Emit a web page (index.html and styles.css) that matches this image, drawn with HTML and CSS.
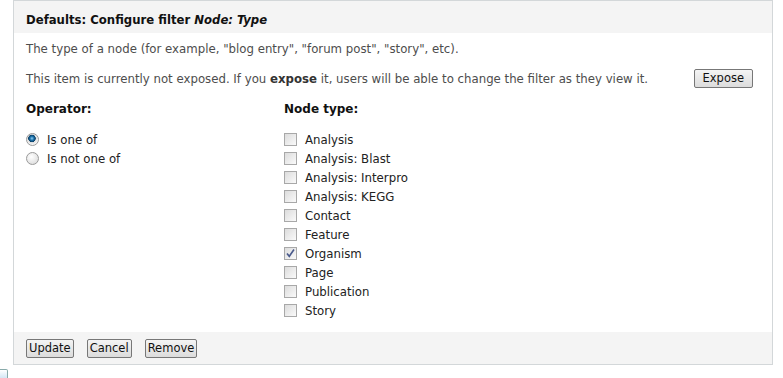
FILE: index.html
```html
<!DOCTYPE html>
<html lang="en">
<head>
    <meta charset="UTF-8">
    <title>Configure filter</title>
    <link rel="stylesheet" href="styles.css">
</head>
<body>
    <form class="views-dialog">
        <div class="dialog-header">
            <h3>Defaults: Configure filter <em>Node: Type</em></h3>
        </div>

        <div class="dialog-body">
            <p class="description">The type of a node (for example, "blog entry", "forum post", "story", etc).</p>

            <div class="expose-row">
                <p>This item is currently not exposed. If you <strong>expose</strong> it, users will be able to change the filter as they view it.</p>
                <button type="button" class="form-button">Expose</button>
            </div>

            <div class="columns">
                <div class="column operator">
                    <label class="column-title">Operator:</label>
                    <label class="option"><input type="radio" name="op" checked> Is one of</label>
                    <label class="option"><input type="radio" name="op"> Is not one of</label>
                </div>
                <div class="column node-type">
                    <label class="column-title">Node type:</label>
                    <label class="option"><input type="checkbox"> Analysis</label>
                    <label class="option"><input type="checkbox"> Analysis: Blast</label>
                    <label class="option"><input type="checkbox"> Analysis: Interpro</label>
                    <label class="option"><input type="checkbox"> Analysis: KEGG</label>
                    <label class="option"><input type="checkbox"> Contact</label>
                    <label class="option"><input type="checkbox"> Feature</label>
                    <label class="option"><input type="checkbox" checked> Organism</label>
                    <label class="option"><input type="checkbox"> Page</label>
                    <label class="option"><input type="checkbox"> Publication</label>
                    <label class="option"><input type="checkbox"> Story</label>
                </div>
            </div>
        </div>

        <div class="dialog-footer">
            <button type="button" class="form-button">Update</button>
            <button type="button" class="form-button">Cancel</button>
            <button type="button" class="form-button">Remove</button>
        </div>
    </form>

    <div class="corner-icon"></div>
</body>
</html>
```

FILE: styles.css
```css
body {
    margin: 0;
    font-family: "DejaVu Sans", Verdana, sans-serif;
    font-size: 11.75px;
    color: #4d4d4d;
    background: #fff;
}

.views-dialog {
    width: 758px;
    margin-left: 13px;
    border: 1px solid #d3d7d9;
}

.dialog-header {
    height: 32px;
    background: #f4f4f4;
    padding: 0 12px;
    display: flex;
    align-items: flex-end;
}

.dialog-header h3 {
    margin: 0 0 6px 0;
    font-size: 11.7px;
    font-weight: bold;
    color: #111;
}

.dialog-body {
    padding: 8px 12px 12px 12px;
}

.description {
    margin: 0;
    line-height: 16px;
}

.expose-row {
    display: flex;
    align-items: center;
    justify-content: space-between;
    margin-top: 12px;
    padding-right: 7px;
}

.expose-row p {
    margin: 0;
}

.expose-row strong {
    color: #333;
}

.form-button {
    font-family: "DejaVu Sans", Verdana, sans-serif;
    font-size: 11.5px;
    color: #111;
    background: linear-gradient(#f4f4f4, #dcdcdc);
    border: 1px solid #777;
    border-radius: 2px;
    padding: 1px 2px;
    height: 19px;
    line-height: 15px;
}

.expose-row .form-button {
    padding: 1px 8px;
}

.columns {
    display: flex;
    margin-top: 13px;
}

.column {
    display: flex;
    flex-direction: column;
}

.operator {
    width: 258px;
}

.column-title {
    font-weight: bold;
    font-size: 12px;
    color: #111;
    margin-bottom: 13px;
    line-height: 16px;
}

.option {
    display: flex;
    align-items: center;
    height: 19px;
    color: #222;
}

.option input {
    appearance: none;
    -webkit-appearance: none;
    margin: 0 8px 0 0;
    width: 13px;
    height: 13px;
    flex: none;
}

.option input[type="radio"] {
    border-radius: 50%;
    border: 1px solid #9a9a9a;
    background: radial-gradient(circle at 40% 35%, #ffffff, #d6d6d6);
}

.option input[type="radio"]:checked {
    background: radial-gradient(circle at 45% 40%, #8fd0f5 0, #1b6fa8 2px, #0a3f66 3.5px, #dedede 4px, #f4f4f4 6px);
}

.option input[type="checkbox"] {
    border: 1px solid #a8a8a8;
    background: linear-gradient(135deg, #dcdcdc, #fafafa);
}

.option input[type="checkbox"]:checked {
    background:
        url("data:image/svg+xml,%3Csvg xmlns='http://www.w3.org/2000/svg' width='11' height='11'%3E%3Cpath d='M2 5.5 L4.3 8.3 L9 1.5' fill='none' stroke='%234a5a8c' stroke-width='1.6'/%3E%3C/svg%3E") no-repeat center,
        linear-gradient(135deg, #dcdcdc, #fafafa);
}

.dialog-footer {
    background: #f4f4f4;
    height: 32px;
    padding: 0 12px;
    display: flex;
    align-items: center;
    gap: 13px;
}

.corner-icon {
    width: 7px;
    height: 9px;
    margin-top: 4px;
    border: 1px solid #8aa;
    border-left: none;
    border-radius: 0 2px 2px 0;
    background: linear-gradient(#fff, #cfe3f3);
}
```
